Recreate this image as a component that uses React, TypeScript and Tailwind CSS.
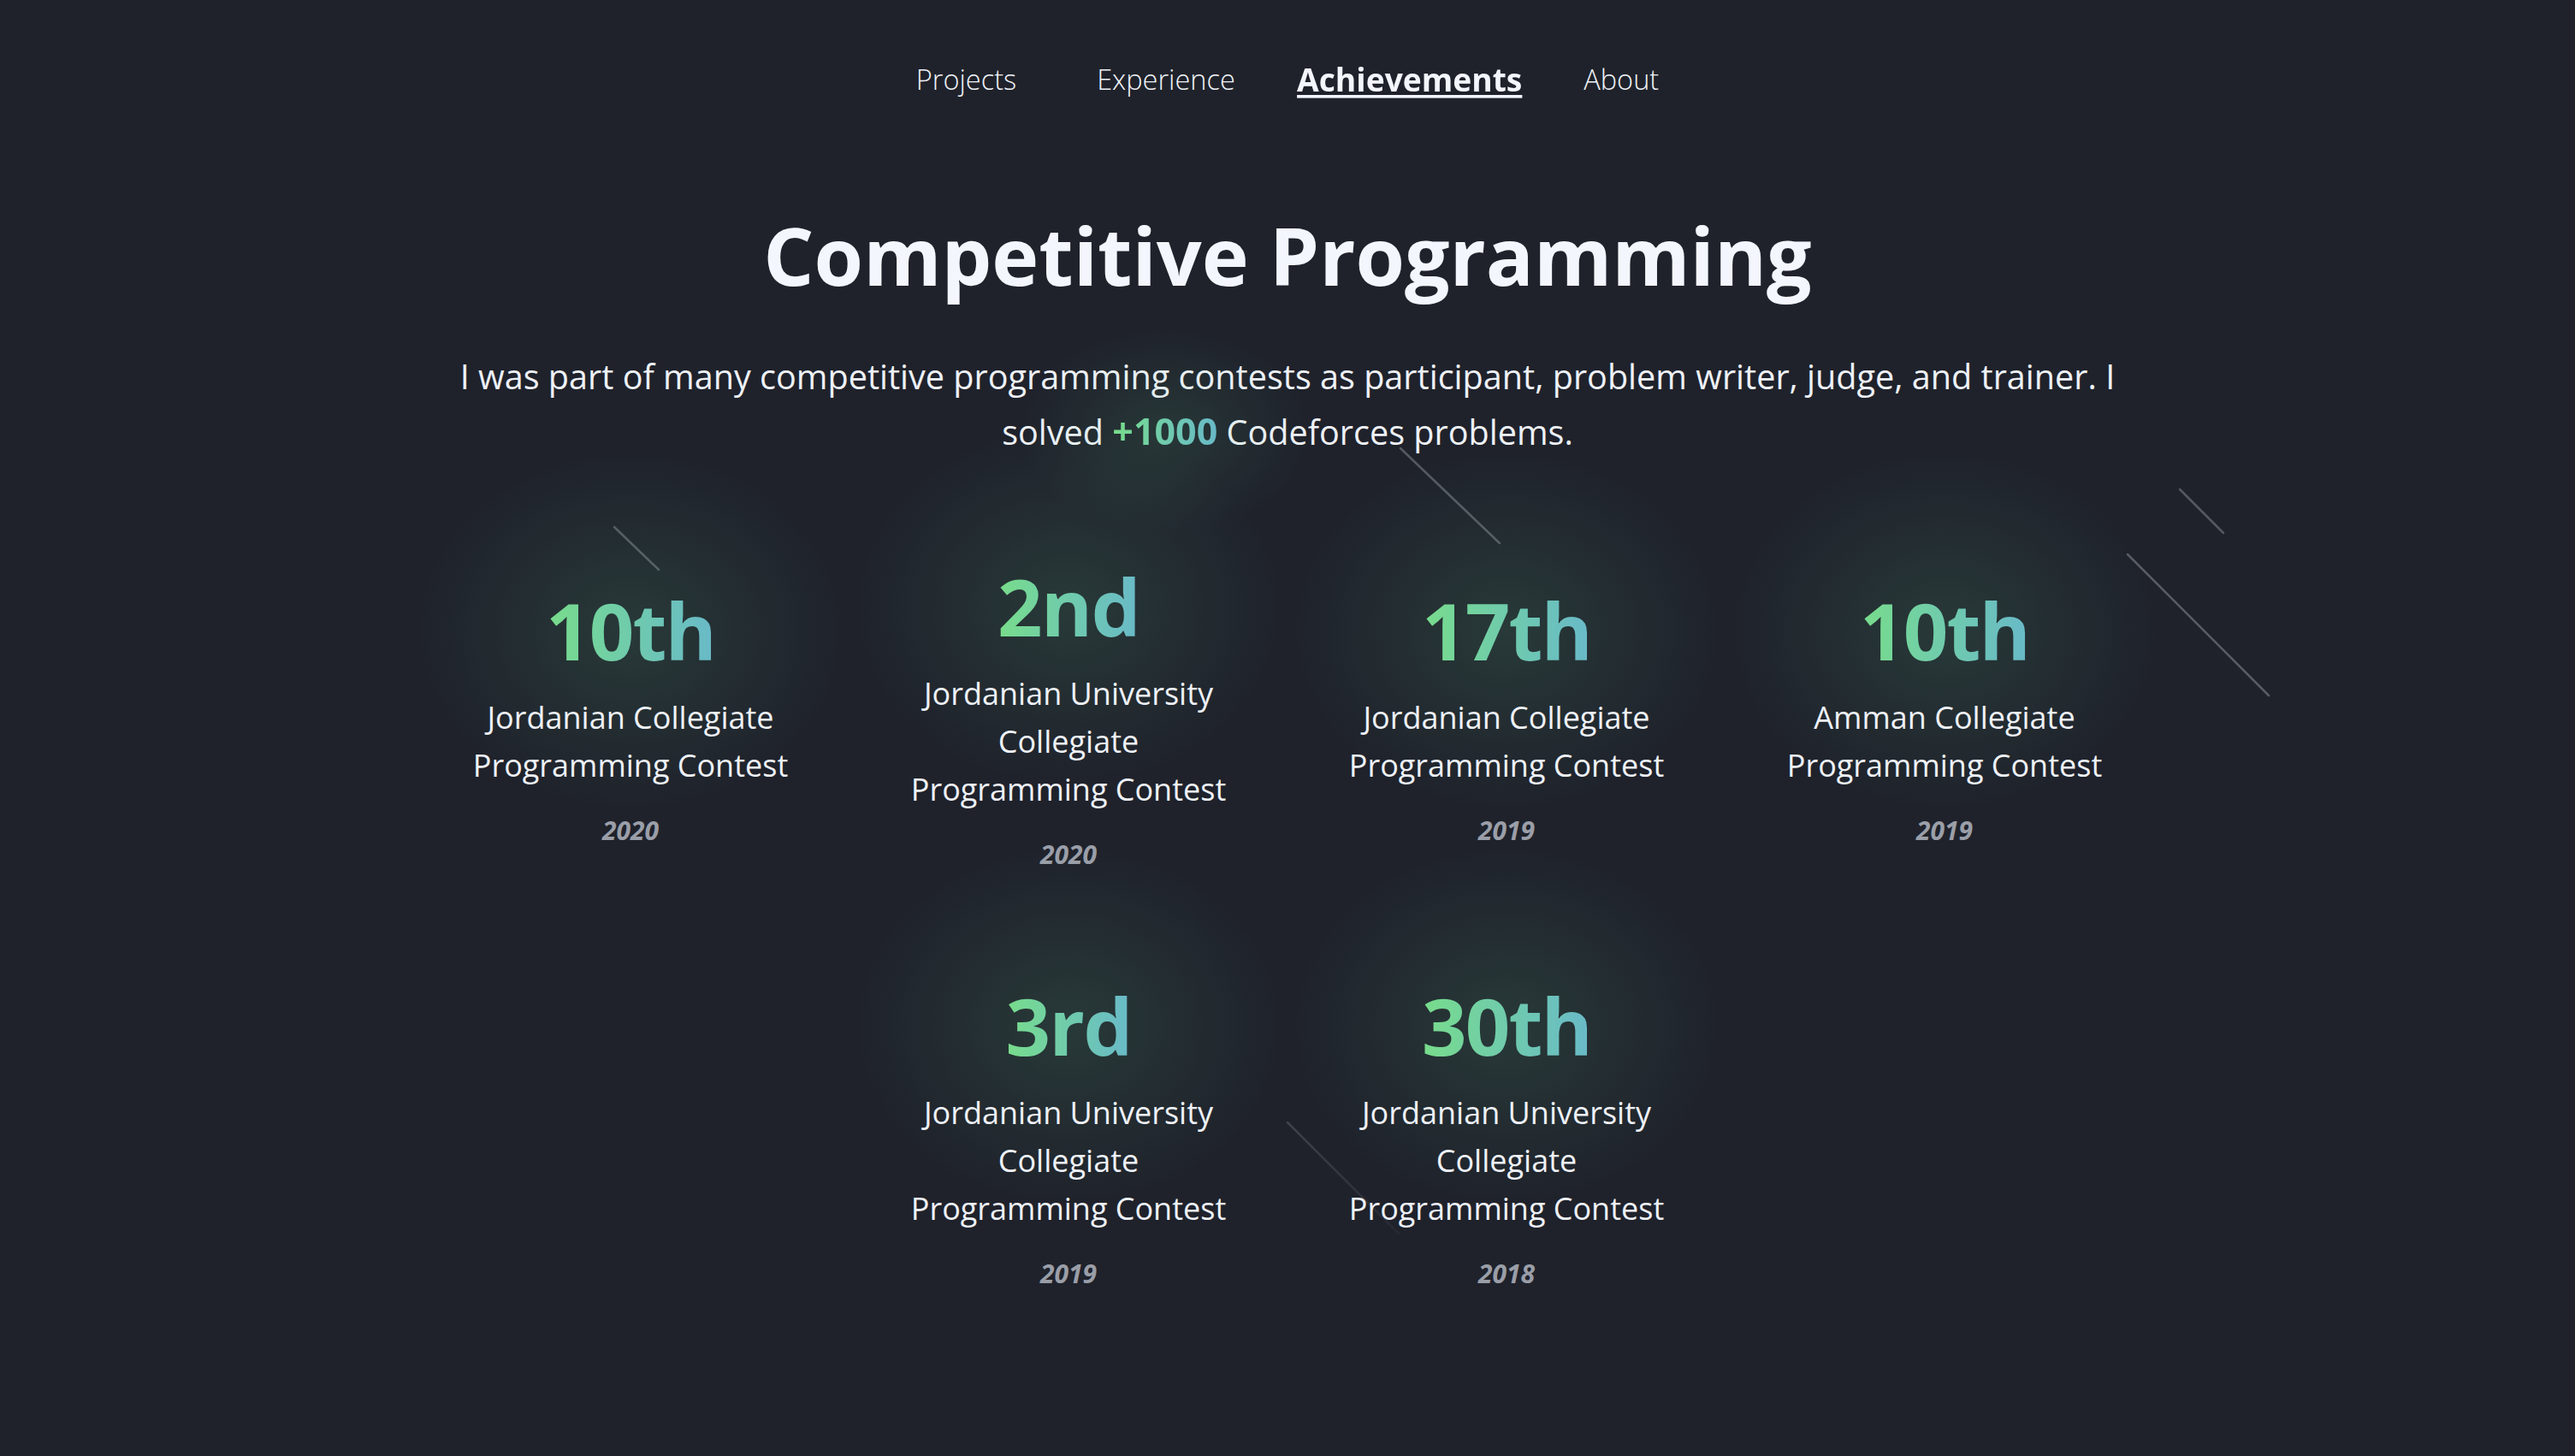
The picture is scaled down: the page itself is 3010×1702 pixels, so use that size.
import React from "react";

type Item = { rank: string; title: string; year: string };

const items: Item[] = [
  { rank: "10th", title: "Jordanian Collegiate Programming Contest", year: "2020" },
  { rank: "2nd", title: "Jordanian University Collegiate Programming Contest", year: "2020" },
  { rank: "17th", title: "Jordanian Collegiate Programming Contest", year: "2019" },
  { rank: "10th", title: "Amman Collegiate Programming Contest", year: "2019" },
  { rank: "3rd", title: "Jordanian University Collegiate Programming Contest", year: "2019" },
  { rank: "30th", title: "Jordanian University Collegiate Programming Contest", year: "2018" },
];

function Card({ item }: { item: Item }) {
  return (
    <div className="relative w-[512px] flex flex-col items-center text-center">
      <div className="absolute left-1/2 top-[46px] w-[500px] h-[420px] -translate-x-1/2 -translate-y-1/2 rounded-full bg-[radial-gradient(closest-side,rgba(95,200,140,0.14),rgba(31,34,43,0))] pointer-events-none" />
      <div className="relative text-[92px] leading-none font-bold tracking-[-0.02em] bg-linear-to-r from-[#78dc8a] to-[#69b9c8] bg-clip-text text-transparent">
        {item.rank}
      </div>
      <div className="relative mt-[28px] w-[380px] text-[36px] leading-[56px] text-[#eef1f7]">
        {item.title}
      </div>
      <div className="relative mt-[28px] text-[30px] leading-[40px] font-bold italic text-[#9a9ea8]">
        {item.year}
      </div>
    </div>
  );
}

export default function App() {
  return (
    <div className="relative min-h-screen w-full overflow-hidden bg-[#1f222b] font-['Open_Sans',sans-serif] text-[#eef1f7]">
      <svg className="absolute inset-0 w-full h-full pointer-events-none" width="3010" height="1702">
        <defs>
          <linearGradient id="fade5" x1="1505" y1="1312" x2="1635" y2="1442" gradientUnits="userSpaceOnUse">
            <stop offset="0" stopColor="#5f636b" stopOpacity="0.5" />
            <stop offset="1" stopColor="#5f636b" stopOpacity="0.1" />
          </linearGradient>
        </defs>
        <g stroke="#5f636b" strokeWidth="2.5" strokeLinecap="round">
          <line x1="718" y1="616" x2="770" y2="666" opacity="0.85" />
          <line x1="1637" y1="524" x2="1753" y2="635" opacity="0.85" />
          <line x1="2548" y1="572" x2="2599" y2="623" opacity="0.85" />
          <line x1="2487" y1="648" x2="2652" y2="813" opacity="0.9" />
        </g>
        <line x1="1505" y1="1312" x2="1635" y2="1442" stroke="url(#fade5)" strokeWidth="2.5" strokeLinecap="round" />
      </svg>

      <nav className="relative flex justify-center items-center gap-[94px] pt-[73px] text-[32.5px] leading-[40px]">
        <a className="font-light text-[#f0f3f8]">Projects</a>
        <a className="font-light text-[#f0f3f8]">Experience</a>
        <a className="text-[31px] font-bold text-[#f3f6fd] scale-[1.2] underline decoration-[3px] underline-offset-[3px]">Achievements</a>
        <a className="font-light text-[#f0f3f8]">About</a>
      </nav>

      <h1 className="relative mt-[130px] text-center text-[93px] leading-[1.2] font-bold text-[#f3f6fd]">
        Competitive Programming
      </h1>

      <p className="relative mt-[53px] text-center text-[39.6px] leading-[64px] text-[#eef1f7]">
        I was part of many competitive programming contests as participant, problem writer, judge, and trainer. I
        <br />
        solved{" "}
        <span className="relative inline-block">
          <span className="absolute left-1/2 top-1/2 w-[340px] h-[240px] -translate-x-1/2 -translate-y-1/2 rounded-full bg-[radial-gradient(closest-side,rgba(95,200,140,0.13),rgba(31,34,43,0))] pointer-events-none" />
          <span className="relative font-bold text-[43px] bg-linear-to-r from-[#78dc8a] to-[#69b9c8] bg-clip-text text-transparent">
            +1000
          </span>
        </span>{" "}
        Codeforces problems.
      </p>

      <div className="relative mx-auto mt-[126px] w-[2050px] flex flex-wrap justify-center items-center gap-y-[134px] pb-[120px]">
        {items.map((it, i) => (
          <Card key={i} item={it} />
        ))}
      </div>
    </div>
  );
}
